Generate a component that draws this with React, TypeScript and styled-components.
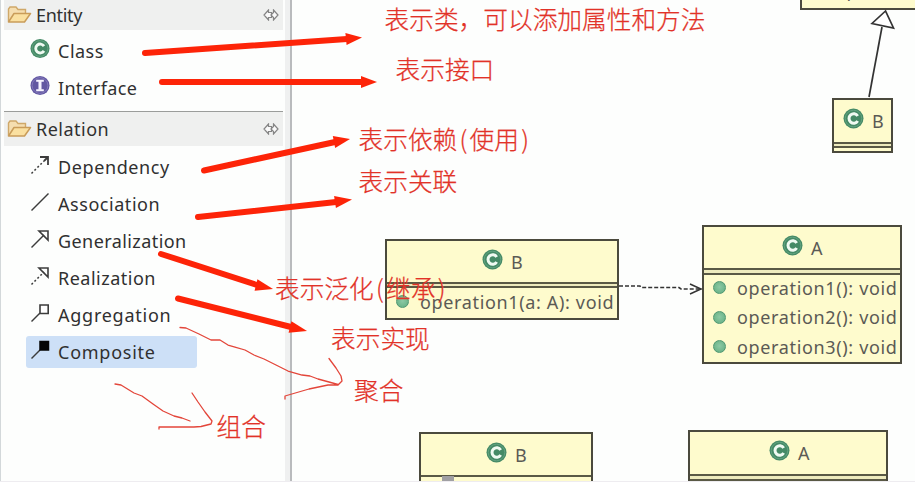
import React from 'react';
import styled, { createGlobalStyle } from 'styled-components';

const GlobalStyle = createGlobalStyle`
  * { box-sizing: border-box; }
  body { margin: 0; overflow: hidden; background: #fdfffd; }
`;

const Page = styled.div`
  position: relative;
  display: flex;
  width: 915px;
  height: 482px;
  overflow: hidden;
  background: #fdfefd;
  border-bottom: 1px solid #eeecf0;
  font-family: 'Noto Sans', 'Noto Sans CJK SC', sans-serif;
`;

const Palette = styled.aside`
  flex: none;
  width: 292px;
  height: 482px;
  padding: 0 7px 0 3px;
  border-left: 1px solid #d3d8da;
  border-right: 2px solid #b9bbbd;
  box-shadow: inset -5px 0 0 #eff0f0;
`;

const DrawerHeader = styled.header<{ $h: number; $ruled?: boolean }>`
  display: flex;
  align-items: center;
  height: ${p => p.$h}px;
  padding: 0 4px 0 3px;
  background: #eff0ef;
  border-top: ${p => (p.$ruled ? '1px solid #9b9d9b' : 'none')};
  font-size: 18px;
  color: #303030;
`;

const HeaderText = styled.span<{ $ls: number }>`
  flex: 1;
  margin-left: 4px;
  line-height: 26px;
  letter-spacing: ${p => p.$ls}px;
`;

const EntityList = styled.div`
  height: 81px;
  padding: 5px 0 0 22px;
`;

const RelationList = styled.div`
  padding: 5px 0 0 22px;
`;

const Item = styled.div<{ $on?: boolean }>`
  display: flex;
  align-items: center;
  width: 171px;
  height: 32px;
  margin-bottom: 5px;
  padding-left: 4px;
  border-radius: 3px;
  background: ${p => (p.$on ? '#cde0f7' : 'transparent')};
  color: #303030;
  font-size: 18px;
`;

const ItemText = styled.span<{ $ls: number }>`
  margin-left: 8px;
  line-height: 26px;
  white-space: nowrap;
  letter-spacing: ${p => p.$ls}px;
`;

const IconSlot = styled.span`
  display: flex;
  flex: none;
  width: 20px;
  height: 30px;
  padding-bottom: 5px;
  align-items: center;
`;

const Canvas = styled.main`
  position: relative;
  flex: 1;
`;

const Node = styled.section<{ $x: number; $y: number; $w: number; $h: number }>`
  position: absolute;
  left: ${p => p.$x - 292}px;
  top: ${p => p.$y}px;
  width: ${p => p.$w}px;
  height: ${p => p.$h}px;
  overflow: hidden;
  background: #fefbcd;
  border: 2px solid #4b4a3d;
  color: #5b5a55;
  font-size: 18px;
`;

const NodeTitle = styled.div<{ $h: number; $pad: number }>`
  display: flex;
  height: ${p => p.$h}px;
  padding: 8px 0 0 ${p => p.$pad}px;
`;

const NodeName = styled.span`
  margin: 2px 0 0 8px;
  line-height: 22px;
  font-size: 18px;
`;

const Divider = styled.div<{ $h?: number }>`
  height: ${p => p.$h ?? 7}px;
  border-top: 2px solid #5a5945;
  border-bottom: 2px solid #5a5945;
  background: #eeebbd;
`;

const Rule = styled.div`
  height: 2px;
  background: #5a5945;
`;

const Operations = styled.div<{ $up: number }>`
  margin-top: -${p => p.$up}px;
`;

const Operation = styled.div`
  display: flex;
  align-items: center;
  height: 29.5px;
  padding-left: 9px;
  white-space: nowrap;
`;

const OperationText = styled.span<{ $ls: number }>`
  margin-left: 11px;
  line-height: 26px;
  letter-spacing: ${p => p.$ls}px;
`;

const Dot = styled.i`
  flex: none;
  width: 13px;
  height: 13px;
  border-radius: 50%;
  border: 1.5px solid #4f9772;
  background: radial-gradient(circle at 50% 45%, #8cc9a4, #62ad80);
`;

const Handle = styled.i`
  position: absolute;
  left: 150px;
  top: 476px;
  width: 12px;
  height: 6px;
  background: #a09fa3;
`;

const Overlay = styled.svg`
  position: absolute;
  left: 0;
  top: 0;
`;

const Note = styled.span<{ $x: number; $y: number }>`
  position: absolute;
  left: ${p => p.$x}px;
  top: ${p => p.$y}px;
  display: flex;
  white-space: nowrap;
  color: #e23228;
  font-family: 'Noto Sans CJK SC', sans-serif;
  font-weight: 300;
  font-size: 24.7px;
  line-height: 30px;
  -webkit-text-stroke: 0.25px #e23228;
`;

const Paren = styled.span`
  width: 12.3px;
  text-align: center;
`;

function Folder() {
  return (
    <svg width="25" height="20" viewBox="0 0 25 20">
      <path d="M1.500 16.500V4L3 2h6l2 2.500h7.500V8" fill="#f5deb0" stroke="#cfa869" strokeWidth="1.4" />
      <path d="M1.500 17 7 8.500h16.500L17.500 17z" fill="#fae0a0" stroke="#c99c59" strokeWidth="1.5" strokeLinejoin="round" />
    </svg>
  );
}

function Pin() {
  return (
    <svg width="16" height="12" viewBox="0 0 16 12" fill="#fafafa" stroke="#858585" strokeWidth="1.2">
      <path d="M5.500 1 1 6l4.500 5V8.500h3v-5h-3z" />
      <path d="M10.500 1l4.500 5-4.500 5V8.500L8 6l2.500-2.500z" />
    </svg>
  );
}

function ClassIcon() {
  return (
    <svg width="21" height="21" viewBox="0 0 21 21">
      <circle cx="10.5" cy="10.5" r="10" fill="#458a66" />
      <circle cx="10.5" cy="10.5" r="8.3" fill="none" stroke="#6aa886" strokeWidth=".8" />
      <path d="M14.700 8A4.700 4.700 0 1 0 14.700 13" fill="none" stroke="#f0faf2" strokeWidth="3" />
    </svg>
  );
}

function InterfaceIcon() {
  return (
    <svg width="21" height="21" viewBox="0 0 21 21">
      <circle cx="10.5" cy="10.5" r="10" fill="#6258a2" />
      <circle cx="10.5" cy="10.5" r="8.3" fill="none" stroke="#8b82c0" strokeWidth=".8" />
      <path d="M6.500 5.500h8M6.500 15.500h8" stroke="#f6f4ff" strokeWidth="2" />
      <path d="M10.500 5v10" stroke="#f6f4ff" strokeWidth="3.2" />
    </svg>
  );
}

type Kind = 'dependency' | 'association' | 'generalization' | 'realization' | 'aggregation' | 'composite';

function RelationIcon({ kind }: { kind: Kind }) {
  const dotted = kind === 'dependency' || kind === 'realization';
  const end = kind === 'association' ? '18.5 1.5' : kind === 'aggregation' || kind === 'composite' ? '10 10' : '14 6';
  return (
    <svg width="20" height="20" viewBox="0 0 20 20" fill="none" stroke="#3c3c3c" strokeWidth="1.5">
      <path d={`M1.5 18.5 ${end}`} strokeDasharray={dotted ? '2 2.2' : undefined} />
      {kind === 'dependency' && <path d="M10 2h8v8M18 2l-4 4" strokeWidth="1.8" />}
      {(kind === 'generalization' || kind === 'realization') && <path d="M9 2h9v9z" strokeWidth="1.6" />}
      {kind === 'aggregation' && <path d="M10 2h8.200v8.500H10z" fill="#fff" strokeWidth="1.6" />}
      {kind === 'composite' && <path d="M10 1.500h8.500V10H10z" fill="#050505" stroke="#050505" />}
    </svg>
  );
}

const relations: { kind: Kind; text: string; ls: number }[] = [
  { kind: 'dependency', text: 'Dependency', ls: 0.6 },
  { kind: 'association', text: 'Association', ls: 0.55 },
  { kind: 'generalization', text: 'Generalization', ls: 0.42 },
  { kind: 'realization', text: 'Realization', ls: 0.5 },
  { kind: 'aggregation', text: 'Aggregation', ls: 0.75 },
  { kind: 'composite', text: 'Composite', ls: 0.75 },
];

const arrows = [
  [145, 53, 347, 39, 362, 37.5],
  [162, 82, 362, 82, 377, 82],
  [204, 170.5, 335, 142, 350, 139],
  [198, 217, 336, 202, 352, 199.5],
  [161, 254, 257, 285, 273, 289],
  [178, 298.5, 291, 327, 307, 331],
];

function Arrow({ p }: { p: number[] }) {
  const [x1, y1, x2, y2, x3, y3] = p;
  const len = Math.hypot(x3 - x2, y3 - y2);
  const nx = (-(y3 - y2) / len) * 6;
  const ny = ((x3 - x2) / len) * 6;
  return (
    <g>
      <path d={`M${x1} ${y1}L${x2} ${y2}`} stroke="#fd2408" strokeWidth="6" strokeLinecap="round" />
      <path d={`M${x2 - 1 + nx} ${y2 + ny}L${x3} ${y3}L${x2 - 1 - nx} ${y2 - ny}z`} fill="#fd2408" />
    </g>
  );
}

export default function App() {
  return (
    <>
      <GlobalStyle />
      <Page>
        <Palette>
          <DrawerHeader $h={30}>
            <Folder />
            <HeaderText $ls={-0.3}>Entity</HeaderText>
            <Pin />
          </DrawerHeader>
          <EntityList>
            <Item><IconSlot><ClassIcon /></IconSlot><ItemText $ls={0.5}>Class</ItemText></Item>
            <Item><IconSlot><InterfaceIcon /></IconSlot><ItemText $ls={0.3}>Interface</ItemText></Item>
          </EntityList>
          <DrawerHeader $h={35} $ruled>
            <Folder />
            <HeaderText $ls={0.5}>Relation</HeaderText>
            <Pin />
          </DrawerHeader>
          <RelationList>
            {relations.map(r => (
              <Item key={r.kind} $on={r.kind === 'composite'}>
                <IconSlot><RelationIcon kind={r.kind} /></IconSlot>
                <ItemText $ls={r.ls}>{r.text}</ItemText>
              </Item>
            ))}
          </RelationList>
        </Palette>
        <Canvas>
          <Node $x={800} $y={-27} $w={140} $h={37}>
            <Operation><Dot /><OperationText $ls={0.65}>operation</OperationText></Operation>
          </Node>
          <Node $x={832} $y={98} $w={61} $h={55}>
            <NodeTitle $h={42} $pad={9}><ClassIcon /><NodeName>B</NodeName></NodeTitle>
            <Divider $h={6} />
          </Node>
          <Node $x={385} $y={239} $w={234} $h={81}>
            <NodeTitle $h={41} $pad={95}><ClassIcon /><NodeName>B</NodeName></NodeTitle>
            <Divider $h={6} />
            <Operations $up={1}>
              <Operation><Dot /><OperationText $ls={0.65}>operation1(a: A): void</OperationText></Operation>
            </Operations>
          </Node>
          <Node $x={702} $y={225} $w={200} $h={139}>
            <NodeTitle $h={41} $pad={78}><ClassIcon /><NodeName>A</NodeName></NodeTitle>
            <Divider />
            <Operations $up={2}>
              {[1, 2, 3].map(n => (
                <Operation key={n}><Dot /><OperationText $ls={0.65}>{`operation${n}(): void`}</OperationText></Operation>
              ))}
            </Operations>
          </Node>
          <Node $x={419} $y={432} $w={174} $h={90}>
            <NodeTitle $h={41} $pad={65}><ClassIcon /><NodeName>B</NodeName></NodeTitle>
            <Rule />
          </Node>
          <Node $x={688} $y={430} $w={200} $h={90}>
            <NodeTitle $h={42} $pad={79}><ClassIcon /><NodeName>A</NodeName></NodeTitle>
            <Divider />
          </Node>
          <Handle />
        </Canvas>
        <Overlay width="915" height="482" viewBox="0 0 915 482" fill="none">
          <path d="M869 97 882 27" stroke="#333" strokeWidth="1.7" />
          <path d="M885.500 11 872 23.500 893.500 28z" fill="#fff" stroke="#333" strokeWidth="1.7" />
          <path d="M619 286h21l1 1.500h38l2 1.500h21" stroke="#333" strokeWidth="1.6" strokeDasharray="4 2" />
          <path d="M690 284l11 5-11 5" stroke="#333" strokeWidth="1.5" />
          {arrows.map((p, i) => <Arrow key={i} p={p} />)}
          <g stroke="#e3463a" strokeWidth="1.3" strokeLinejoin="round" strokeLinecap="round">
            <path d="M180 327.500 186 328 199 334 211 340H220L228 345 235 347 245 350 254 355 264 359 276 365 288 371 302 375 310 376 318 379 329 382 338 384.500M329 358.500 336 368 341 376 342 381 338 385 328 385 309 389 285 396V399" />
            <path d="M115 384 121 385 134 393 142 396 153 404 163 411 174 416 182 418 190 421M192 393 198 402 205 412 212 421 211 424 201 426.500 194 427H159V429" />
          </g>
        </Overlay>
        <Note $x={384.5} $y={3}>表示类，可以添加属性和方法</Note>
        <Note $x={395.5} $y={53}>表示接口</Note>
        <Note $x={358.5} $y={123}>表示依赖<Paren>(</Paren>使用<Paren>)</Paren></Note>
        <Note $x={358.5} $y={165}>表示关联</Note>
        <Note $x={275} $y={272}>表示泛化<Paren>(</Paren>继承<Paren>)</Paren></Note>
        <Note $x={331} $y={322}>表示实现</Note>
        <Note $x={354} $y={374}>聚合</Note>
        <Note $x={216.5} $y={410}>组合</Note>
      </Page>
    </>
  );
}
